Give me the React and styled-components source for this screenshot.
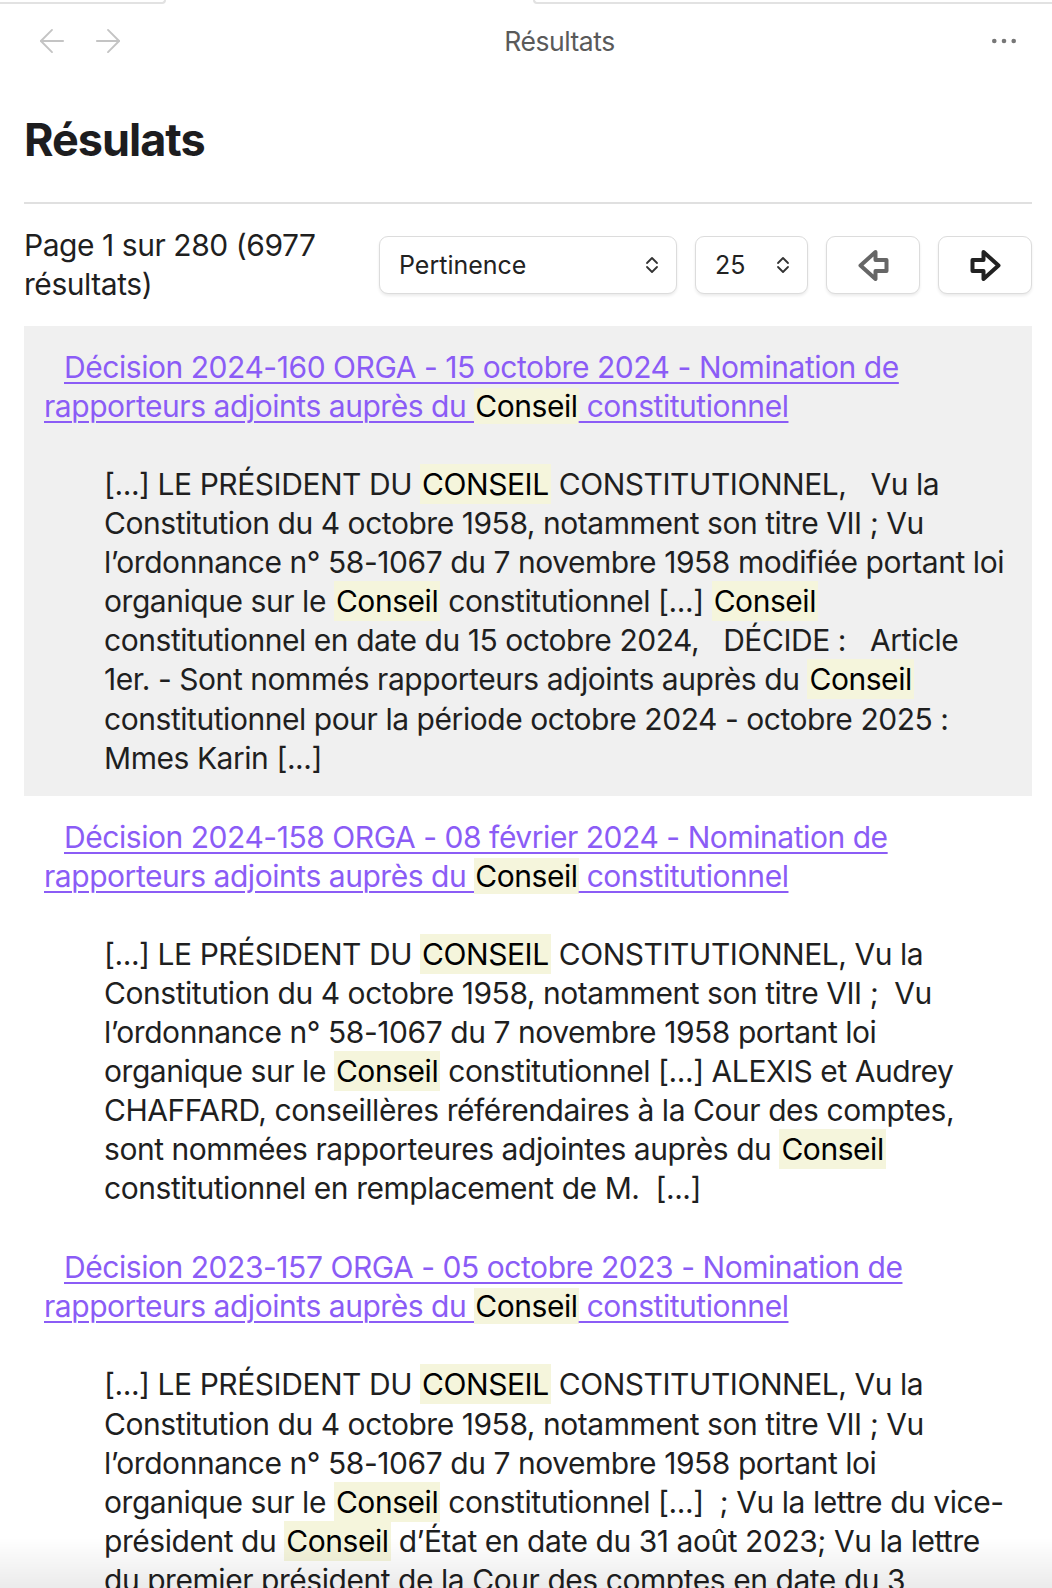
import React from "react";
import styled, { createGlobalStyle } from "styled-components";

const GlobalStyle = createGlobalStyle`
  html, body {
    margin: 0;
    padding: 0;
    background: #fff;
  }
  body {
    font-family: Inter, "Noto Sans", "Liberation Sans", sans-serif;
    color: #1f1f1f;
    -webkit-font-smoothing: antialiased;
  }
`;

const Page = styled.div`
  min-height: 100vh;
  background: #fff;
`;

const TopStrip = styled.div`
  display: flex;
  justify-content: space-between;
  height: 4px;
`;

const Tab = styled.div`
  width: ${(p) => p.$width}px;
  height: 2px;
  border: 2px solid #e2e2e2;
  border-top: none;
  ${(p) => (p.$side === "left" ? "border-left: none;" : "border-right: none;")}
  border-radius: ${(p) => (p.$side === "left" ? "0 0 10px 0" : "0 0 0 10px")};
`;

const Header = styled.header`
  display: flex;
  align-items: center;
  height: 74px;
  padding: 0 36px 0 33px;
`;

const NavGroup = styled.div`
  display: flex;
  align-items: center;
  gap: 18px;
  color: #c4c4c4;
`;

const HeaderTitle = styled.div`
  flex: 1;
  text-align: center;
  font-size: 26.5px;
  color: #5a5a5a;
  letter-spacing: -0.45px;
`;

const MoreButton = styled.div`
  display: flex;
  color: #777;
`;

const Main = styled.main`
  padding: 0 20px 0 24px;
`;

const Heading = styled.h1`
  margin: 36px 0 0;
  padding-bottom: 36px;
  font-size: 45px;
  line-height: 52px;
  font-weight: 700;
  letter-spacing: -1px;
  color: #1d1d1f;
  border-bottom: 2px solid #e0e0e0;
`;

const Toolbar = styled.div`
  display: flex;
  align-items: center;
  gap: 18px;
  margin-top: 22px;
`;

const PageInfo = styled.div`
  flex: 1;
  font-size: 30px;
  line-height: 39px;
  letter-spacing: -0.45px;
  color: #1f1f1f;
`;

const SelectBox = styled.div`
  display: flex;
  align-items: center;
  justify-content: space-between;
  box-sizing: border-box;
  width: ${(p) => p.$width}px;
  height: 58px;
  padding: 0 17px 0 19px;
  background: #fff;
  border: 1.5px solid #dcdcdc;
  border-radius: 9px;
  box-shadow: 0 2px 3px rgba(0, 0, 0, 0.08);
  font-size: 25px;
  color: #222;
`;

const PagerButton = styled.button`
  display: flex;
  align-items: center;
  justify-content: center;
  box-sizing: border-box;
  width: 94px;
  height: 58px;
  padding: 0;
  background: #fff;
  border: 1.5px solid #dcdcdc;
  border-radius: 9px;
  box-shadow: 0 2px 3px rgba(0, 0, 0, 0.08);
  color: ${(p) => (p.disabled ? "#666" : "#222")};
`;

const Results = styled.div`
  margin-top: 22px;
`;

const Result = styled.article`
  padding: 22px 20px 18px;
  background: ${(p) => (p.$active ? "#f0f0f0" : "transparent")};
`;

const TitleLink = styled.a`
  display: block;
  text-indent: 20px;
  white-space: nowrap;
  font-size: 30px;
  line-height: 39px;
  letter-spacing: -0.45px;
  color: #8b5cf6;
  text-decoration: underline;
  text-decoration-thickness: 2px;
  text-underline-offset: 4px;
  cursor: pointer;
`;

const TitleMark = styled.span`
  display: inline-block;
  text-indent: 0;
  padding: 0 1px;
  line-height: 36px;
  background: #f5f5dc;
  color: #000;
`;

const Excerpt = styled.p`
  margin: 39px 0 0 60px;
  white-space: nowrap;
  font-size: 30px;
  line-height: 39.1px;
  letter-spacing: -0.45px;
  color: #1f1f1f;
`;

const Mark = styled.mark`
  padding: 2px 2px;
  background: #f5f5dc;
  color: #000;
`;

const BottomFade = styled.div`
  position: fixed;
  left: 0;
  right: 0;
  bottom: 0;
  height: 50px;
  pointer-events: none;
  background: linear-gradient(to bottom, rgba(0, 0, 0, 0), rgba(0, 0, 0, 0.08));
`;

const NavArrow = ({ dir }) => (
  <svg width="38" height="38" viewBox="0 0 24 24" fill="none" stroke="currentColor" strokeWidth="1.2" strokeLinecap="round" strokeLinejoin="round">
    {dir === "left" ? (
      <>
        <path d="m12 19-7-7 7-7" />
        <path d="M19 12H5" />
      </>
    ) : (
      <>
        <path d="m12 5 7 7-7 7" />
        <path d="M5 12h14" />
      </>
    )}
  </svg>
);

const Dots = () => (
  <svg width="24" height="6" viewBox="0 0 24 6" fill="currentColor">
    <circle cx="2.3" cy="3" r="2.3" />
    <circle cx="12" cy="3" r="2.3" />
    <circle cx="21.7" cy="3" r="2.3" />
  </svg>
);

const UpDown = () => (
  <svg width="14" height="18" viewBox="0 0 14 18" fill="none" stroke="#333" strokeWidth="1.8" strokeLinecap="round" strokeLinejoin="round">
    <path d="M2 7 7 2l5 5" />
    <path d="M2 11l5 5 5-5" />
  </svg>
);

const BigArrow = ({ dir }) => (
  <svg width="31" height="31" viewBox="0 0 30 31" fill="none" stroke="currentColor" strokeWidth="4" strokeLinejoin="round">
    {dir === "left" ? (
      <path d="M28 10H17V2L2 15.5 17 29v-8h11z" />
    ) : (
      <path d="M2 10h11V2l15 13.5L13 29v-8H2z" />
    )}
  </svg>
);

const highlight = (text, Comp) =>
  text.split(/\b(Conseil|CONSEIL)\b/).map((part, i) =>
    i % 2 === 1 ? <Comp key={i}>{part}</Comp> : part
  );

const renderLines = (lines, Comp) =>
  lines.map((line, i) => (
    <React.Fragment key={i}>
      {i > 0 && <br />}
      {highlight(line, Comp)}
    </React.Fragment>
  ));

const results = [
  {
    title: [
      "Décision 2024-160 ORGA - 15 octobre 2024 - Nomination de",
      "rapporteurs adjoints auprès du Conseil constitutionnel",
    ],
    excerpt: [
      "[...] LE PRÉSIDENT DU CONSEIL CONSTITUTIONNEL,\u00a0\u00a0 Vu la",
      "Constitution du 4 octobre 1958, notamment son titre VII ; Vu",
      "l’ordonnance n° 58-1067 du 7 novembre 1958 modifiée portant loi",
      "organique sur le Conseil constitutionnel [...] Conseil",
      "constitutionnel en date du 15 octobre 2024,\u00a0\u00a0 DÉCIDE :\u00a0\u00a0 Article",
      "1er. - Sont nommés rapporteurs adjoints auprès du Conseil",
      "constitutionnel pour la période octobre 2024 - octobre 2025 :",
      "Mmes Karin [...]",
    ],
    active: true,
  },
  {
    title: [
      "Décision 2024-158 ORGA - 08 février 2024 - Nomination de",
      "rapporteurs adjoints auprès du Conseil constitutionnel",
    ],
    excerpt: [
      "[...] LE PRÉSIDENT DU CONSEIL CONSTITUTIONNEL, Vu la",
      "Constitution du 4 octobre 1958, notamment son titre VII ;\u00a0 Vu",
      "l’ordonnance n° 58-1067 du 7 novembre 1958 portant loi",
      "organique sur le Conseil constitutionnel [...] ALEXIS et Audrey",
      "CHAFFARD, conseillères référendaires à la Cour des comptes,",
      "sont nommées rapporteures adjointes auprès du Conseil",
      "constitutionnel en remplacement de M.\u00a0 [...]",
    ],
  },
  {
    title: [
      "Décision 2023-157 ORGA - 05 octobre 2023 - Nomination de",
      "rapporteurs adjoints auprès du Conseil constitutionnel",
    ],
    excerpt: [
      "[...] LE PRÉSIDENT DU CONSEIL CONSTITUTIONNEL, Vu la",
      "Constitution du 4 octobre 1958, notamment son titre VII ; Vu",
      "l’ordonnance n° 58-1067 du 7 novembre 1958 portant loi",
      "organique sur le Conseil constitutionnel [...]\u00a0 ; Vu la lettre du vice-",
      "président du Conseil d’État en date du 31 août 2023; Vu la lettre",
      "du premier président de la Cour des comptes en date du 3",
      "octobre 2023 ; DÉCIDE : Article 1er. [...]",
    ],
  },
];

export default function App() {
  return (
    <Page>
      <GlobalStyle />
      <TopStrip>
        <Tab $side="left" $width={164} />
        <Tab $side="right" $width={517} />
      </TopStrip>
      <Header>
        <NavGroup>
          <NavArrow dir="left" />
          <NavArrow dir="right" />
        </NavGroup>
        <HeaderTitle>Résultats</HeaderTitle>
        <MoreButton>
          <Dots />
        </MoreButton>
      </Header>
      <Main>
        <Heading>Résulats</Heading>
        <Toolbar>
          <PageInfo>Page 1 sur 280 (6977 résultats)</PageInfo>
          <SelectBox $width={298}>
            <span>Pertinence</span>
            <UpDown />
          </SelectBox>
          <SelectBox $width={113}>
            <span>25</span>
            <UpDown />
          </SelectBox>
          <PagerButton disabled>
            <BigArrow dir="left" />
          </PagerButton>
          <PagerButton>
            <BigArrow dir="right" />
          </PagerButton>
        </Toolbar>
        <Results>
          {results.map((r) => (
            <Result key={r.title[0]} $active={r.active}>
              <TitleLink>{renderLines(r.title, TitleMark)}</TitleLink>
              <Excerpt>{renderLines(r.excerpt, Mark)}</Excerpt>
            </Result>
          ))}
        </Results>
      </Main>
      <BottomFade />
    </Page>
  );
}
